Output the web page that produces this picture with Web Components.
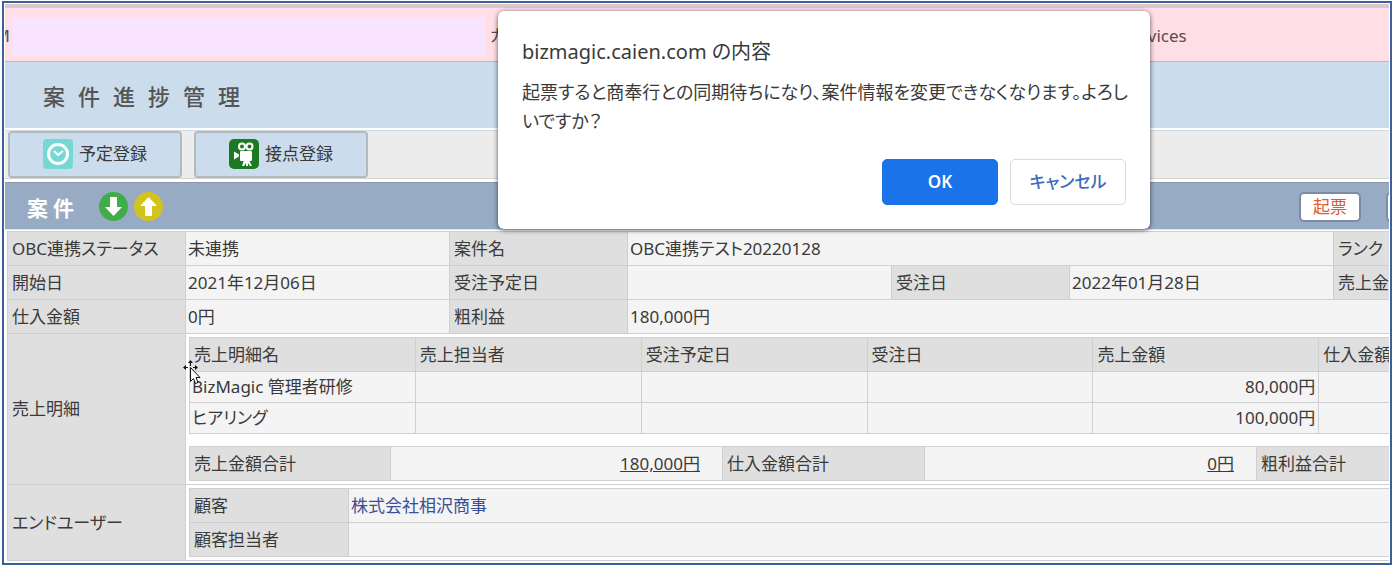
<!DOCTYPE html>
<html lang="ja">
<head>
<meta charset="utf-8">
<title>案件進捗管理</title>
<style>
  body {
    margin: 0;
    padding: 1px 2px 2px;
    background: #fff;
    color: #3a3a3a;
    font: 17px/24px "Noto Sans", "Noto Sans CJK JP", sans-serif;
    font-feature-settings: "palt";
  }
</style>
</head>
<body>
<app-frame>
  <notice-bar></notice-bar>
  <page-title>案件進捗管理</page-title>
  <tool-bar>
    <tool-button icon="clock">予定登録</tool-button>
    <tool-button icon="camera">接点登録</tool-button>
  </tool-bar>
  <section-header heading="案件">起票</section-header>
  <deal-table></deal-table>
  <confirm-dialog slot="overlay" host="bizmagic.caien.com">起票すると商奉行との同期待ちになり、案件情報を変更できなくなります。よろしいですか？</confirm-dialog>
  <move-cursor slot="overlay"></move-cursor>
</app-frame>

<script>
  class AppFrame extends HTMLElement {
    connectedCallback() {
      this.attachShadow({mode: 'open'});
      this.shadowRoot.innerHTML = `
        <style>
          :host {
            display: block;
            position: relative;
            border: 2px solid #3c5f9e;
            overflow: hidden;
          }
          .page {
            margin: 1px;
            border-top: 4px solid #d9c6cf;
            overflow: hidden;
          }
        </style>
        <main class="page"><slot></slot></main>
        <slot name="overlay"></slot>
      `;
    }
  }
  customElements.define('app-frame', AppFrame);

  class NoticeBar extends HTMLElement {
    connectedCallback() {
      this.attachShadow({mode: 'open'});
      this.shadowRoot.innerHTML = `
        <style>
          :host {
            display: flex;
            align-items: center;
            box-sizing: border-box;
            height: 54px;
            padding-top: 3px;
            background: #ffdfe5;
            border-bottom: 1px solid #c3b4bf;
            color: #5d4a50;
          }
          .cut {
            display: flex;
            justify-content: flex-end;
            width: 5px;
            overflow: hidden;
            margin-right: 2px;
          }
          .mask {
            width: 474px;
            height: 39px;
            background: #f8e4ff;
            margin-right: 4px;
          }
          .tail { margin-left: 642px; }
        </style>
        <span class="cut">M</span>
        <span class="mask"></span>
        <span>カ</span>
        <span class="tail">vices</span>
      `;
    }
  }
  customElements.define('notice-bar', NoticeBar);

  class PageTitle extends HTMLElement {
    connectedCallback() {
      this.attachShadow({mode: 'open'});
      this.shadowRoot.innerHTML = `
        <style>
          :host {
            display: block;
            background: #cbdcec;
            padding: 18px 38px 16px;
          }
          h1 {
            margin: 0;
            font-size: 22px;
            line-height: 32px;
            font-weight: 500;
            letter-spacing: 13px;
            color: #555;
          }
        </style>
        <h1><slot></slot></h1>
      `;
    }
  }
  customElements.define('page-title', PageTitle);

  class ToolBar extends HTMLElement {
    connectedCallback() {
      this.attachShadow({mode: 'open'});
      this.shadowRoot.innerHTML = `
        <style>
          :host {
            display: flex;
            gap: 12px;
            margin: 2px 0 3px;
            padding: 0 3px;
            background: #ececec;
            border-top: 1px solid #cfdbe4;
            border-bottom: 1px solid #d4d4d4;
          }
        </style>
        <slot></slot>
      `;
    }
  }
  customElements.define('tool-bar', ToolBar);

  const ICONS = {
    clock: `
      <rect width="30" height="30" rx="4" fill="#75d8d6"/>
      <circle cx="15" cy="15" r="9.500" fill="none" stroke="#fff" stroke-width="3"/>
      <path d="M11 12l4 4 5-4" fill="none" stroke="#fff" stroke-width="2"/>`,
    camera: `
      <rect width="30" height="30" rx="5" fill="#1d7a22"/>
      <g fill="#fff">
        <rect x="11" y="12" width="12" height="10" rx="1"/>
        <path d="M10 15.500l-5-3v8l5-3zM15 21h5l3 6h-2l-2-3v3h-2v-3l-2 3h-2z"/>
      </g>
      <g fill="#1d7a22" stroke="#fff" stroke-width="2">
        <circle cx="13" cy="7.500" r="3"/>
        <circle cx="20.500" cy="7.500" r="3"/>
      </g>`
  };

  class ToolButton extends HTMLElement {
    connectedCallback() {
      const icon = ICONS[this.getAttribute('icon')] || '';

      this.attachShadow({mode: 'open'});
      this.shadowRoot.innerHTML = `
        <style>
          :host { display: block; }
          button {
            display: flex;
            align-items: center;
            justify-content: center;
            gap: 6px;
            width: 174px;
            height: 47px;
            padding: 0 0 2px;
            border: 2px solid #b4b9be;
            border-radius: 4px;
            background: #cbdcec;
            color: #3a3a3a;
            font: inherit;
            font-feature-settings: inherit;
          }
        </style>
        <button type="button">
          <svg width="30" height="30" viewBox="0 0 30 30" aria-hidden="true">${icon}</svg>
          <slot></slot>
        </button>
      `;
    }
  }
  customElements.define('tool-button', ToolButton);

  class SectionHeader extends HTMLElement {
    connectedCallback() {
      const heading = this.getAttribute('heading') || '';

      this.attachShadow({mode: 'open'});
      this.shadowRoot.innerHTML = `
        <style>
          :host {
            display: flex;
            align-items: center;
            height: 46px;
            padding-left: 22px;
            background: #98abc5;
            border-top: 1px solid #8a98aa;
            border-bottom: 1px solid #dbe4ef;
          }
          h2 {
            margin: 0 20px 0 0;
            padding-top: 3px;
            font-size: 21px;
            line-height: 30px;
            letter-spacing: 5px;
            color: #fff;
          }
          .move {
            width: 29px;
            height: 29px;
            padding: 0;
            margin-right: 6px;
            border: 0;
            background: none;
          }
          svg { display: block; }
          .actions {
            display: flex;
            flex: none;
            gap: 25px;
            margin-left: auto;
            margin-right: -59px;
            padding-top: 2px;
          }
          .action {
            width: 62px;
            height: 30px;
            padding: 0;
            border: 2px solid #7d8ca4;
            border-radius: 5px;
            background: #fff;
            color: #dd5b2c;
            font: inherit;
            line-height: 24px;
          }
        </style>
        <h2>${heading}</h2>
        <button class="move" type="button" aria-label="down">
          <svg width="29" height="29" viewBox="0 0 29 29">
            <circle cx="14.500" cy="14.500" r="14.500" fill="#3fae49"/>
            <path d="M11 5h7v10h5l-8.500 9L6 15h5z" fill="#fff"/>
          </svg>
        </button>
        <button class="move" type="button" aria-label="up">
          <svg width="29" height="29" viewBox="0 0 29 29">
            <circle cx="14.500" cy="14.500" r="14.500" fill="#d2c31f"/>
            <path d="M11 24h7V14h5l-8.500-9L6 14h5z" fill="#fff"/>
          </svg>
        </button>
        <div class="actions">
          <button class="action" type="button"><slot></slot></button>
          <button class="action" type="button" aria-label="more"></button>
        </div>
      `;
    }
  }
  customElements.define('section-header', SectionHeader);

  class DealTable extends HTMLElement {
    connectedCallback() {
      this.attachShadow({mode: 'open'});
      this.shadowRoot.innerHTML = `
        <style>
          :host {
            display: block;
            padding: 1px 2px;
            background: #fff;
          }
          table {
            table-layout: fixed;
            border-collapse: collapse;
            width: 100%;
          }
          .deal { width: 1768px; }
          th, td {
            height: 25px;
            padding: 4px;
            border: 1px solid #cfcfcf;
            background: #f4f4f4;
            font-weight: 400;
            text-align: left;
            white-space: nowrap;
          }
          th { background: #dfdfdf; }
          td { padding-left: 2px; }
          .nest {
            padding: 3px;
            background: #fff;
          }
          .items td {
            height: 23px;
            padding-top: 3px;
            padding-bottom: 3px;
          }
          .items td.num {
            padding-right: 3px;
            text-align: right;
          }
          .sums { margin-top: 12px; }
          .sums td {
            padding-right: 22px;
            text-align: right;
            text-decoration: underline;
          }
          a {
            color: #3a4f96;
            text-decoration: none;
          }
        </style>
        <table class="deal">
          <colgroup>
            <col style="width:178px"><col style="width:264px">
            <col style="width:178px"><col style="width:264px">
            <col style="width:178px"><col style="width:264px">
            <col style="width:178px"><col>
          </colgroup>
          <tr>
            <th>OBC連携ステータス</th><td>未連携</td>
            <th>案件名</th><td colspan="3">OBC連携テスト20220128</td>
            <th>ランク</th><td></td>
          </tr>
          <tr>
            <th>開始日</th><td>2021年12月06日</td>
            <th>受注予定日</th><td></td>
            <th>受注日</th><td>2022年01月28日</td>
            <th>売上金額</th><td></td>
          </tr>
          <tr>
            <th>仕入金額</th><td>0円</td>
            <th>粗利益</th><td colspan="5">180,000円</td>
          </tr>
          <tr>
            <th>売上明細</th>
            <td class="nest" colspan="7">
              <table class="items">
                <tr><th>売上明細名</th><th>売上担当者</th><th>受注予定日</th><th>受注日</th><th>売上金額</th><th>仕入金額</th><th></th></tr>
                <tr><td>BizMagic 管理者研修</td><td></td><td></td><td></td><td class="num">80,000円</td><td></td><td></td></tr>
                <tr><td>ヒアリング</td><td></td><td></td><td></td><td class="num">100,000円</td><td></td><td></td></tr>
              </table>
              <table class="sums">
                <colgroup>
                  <col style="width:201px"><col style="width:332px">
                  <col style="width:202px"><col style="width:332px">
                  <col style="width:202px"><col>
                </colgroup>
                <tr><th>売上金額合計</th><td>180,000円</td><th>仕入金額合計</th><td>0円</td><th>粗利益合計</th><td></td></tr>
              </table>
            </td>
          </tr>
          <tr>
            <th>エンドユーザー</th>
            <td class="nest" colspan="7">
              <table>
                <colgroup><col style="width:159px"><col></colgroup>
                <tr><th>顧客</th><td><a href="#customer">株式会社相沢商事</a></td></tr>
                <tr><th>顧客担当者</th><td></td></tr>
              </table>
            </td>
          </tr>
        </table>
      `;
    }
  }
  customElements.define('deal-table', DealTable);

  class ConfirmDialog extends HTMLElement {
    connectedCallback() {
      const host = this.getAttribute('host') || '';

      this.attachShadow({mode: 'open'});
      this.shadowRoot.innerHTML = `
        <style>
          :host {
            display: block;
            position: absolute;
            top: 8px;
            left: 494px;
            width: 652px;
          }
          dialog {
            position: static;
            width: auto;
            margin: 0;
            box-sizing: border-box;
            padding: 25px 24px 24px;
            border: 0;
            border-radius: 6px;
            background: #fff;
            color: #3a3a3a;
            box-shadow: 0 1px 5px rgba(0, 0, 0, .65);
          }
          h2 {
            margin: 0 0 10px;
            font-size: 20px;
            line-height: 32px;
            font-weight: 400;
          }
          p {
            margin: 0 -12px 0 0;
            font-size: 18px;
            line-height: 29px;
          }
          .buttons {
            display: flex;
            justify-content: flex-end;
            gap: 12px;
            margin-top: 23px;
          }
          button {
            width: 116px;
            height: 46px;
            padding: 0;
            border: 1px solid #d8dade;
            border-radius: 5px;
            background: #fff;
            color: #3d6ab8;
            font: inherit;
            font-feature-settings: inherit;
            font-weight: 500;
          }
          .ok {
            border-color: #1a73e8;
            background: #1a73e8;
            color: #fff;
            font-weight: 600;
          }
        </style>
        <dialog open aria-label="${host}">
          <h2>${host} の内容</h2>
          <p><slot></slot></p>
          <div class="buttons">
            <button class="ok" type="button">OK</button>
            <button type="button">キャンセル</button>
          </div>
        </dialog>
      `;
    }
  }
  customElements.define('confirm-dialog', ConfirmDialog);

  class MoveCursor extends HTMLElement {
    connectedCallback() {
      this.attachShadow({mode: 'open'});
      this.shadowRoot.innerHTML = `
        <style>
          :host {
            display: block;
            position: absolute;
            top: 357px;
            left: 179px;
          }
          svg { display: block; }
        </style>
        <svg width="18" height="26" viewBox="0 0 18 26" aria-hidden="true">
          <path d="M7.500 0l2.500 3H5zM0 7.500L3 5v5zM15 7.500L12 5v5zM7 3h1v3H7zM3 7h2v1H3zM10 7h2v1h-2z" fill="#111"/>
          <path d="M7.500 7.500v14l3-3 2 5 2.500-1-2-5h4z" fill="#fff" stroke="#111"/>
        </svg>
      `;
    }
  }
  customElements.define('move-cursor', MoveCursor);
</script>
</body>
</html>
